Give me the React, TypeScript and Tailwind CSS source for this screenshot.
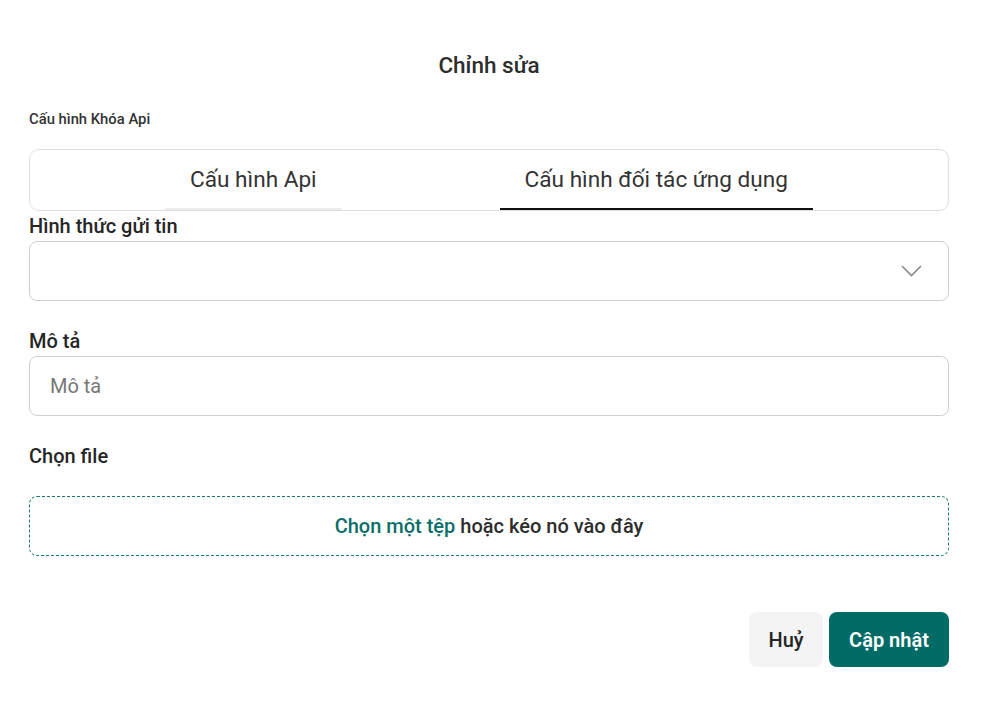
import React, { useState } from 'react';

export default function App() {
  const [tab, setTab] = useState(1);
  const tabs = ['Cấu hình Api', 'Cấu hình đối tác ứng dụng'];

  return (
    <div className="min-h-screen bg-white pl-[29px] pr-[34px] pt-[50px] text-[#2b2b2b]" style={{ fontFamily: 'Roboto, "Noto Sans", sans-serif' }}>
      <h1 className="text-center text-[22.5px] leading-[30px] font-medium text-[#2d2d2d]">Chỉnh sửa</h1>

      <div className="mt-[30px] text-[14.8px] leading-[18px] font-medium text-[#333]">Cấu hình Khóa Api</div>

      {/* Tabs */}
      <div className="mt-[21px] h-[62px] rounded-[10px] border border-[#dedede] flex justify-center gap-[158px]">
        {tabs.map((t, i) => (
          <button
            key={t}
            onClick={() => setTab(i)}
            className={
              'h-full px-[25px] pt-[2px] text-[22.6px] font-normal text-[#333] border-b-[2px] ' +
              (tab === i ? 'border-[#111]' : 'border-[#ededed]')
            }
          >
            {t}
          </button>
        ))}
      </div>

      <label className="block mt-[2px] text-[20px] leading-[26px] font-medium text-[#262626]">Hình thức gửi tin</label>
      <div className="mt-[2px] h-[60px] rounded-[8px] border border-[#cfcfcf] flex items-center justify-end pr-[26px]">
        <svg width="21" height="12" viewBox="0 0 21 12" fill="none">
          <polyline points="1,1 10.5,10.5 20,1" stroke="#8a8a8a" strokeWidth="1.6" />
        </svg>
      </div>

      <label className="block mt-[27px] text-[20px] leading-[26px] font-medium text-[#262626]">Mô tả</label>
      <input
        placeholder="Mô tả"
        className="mt-[2px] w-full h-[60px] rounded-[8px] border border-[#cfcfcf] px-[20px] text-[20px] text-[#333] placeholder:text-[#777] outline-none"
      />

      <label className="block mt-[27px] text-[20px] leading-[26px] font-medium text-[#262626]">Chọn file</label>
      <div className="mt-[27px] h-[60px] rounded-[8px] border border-dashed border-[#1a7a75] flex items-center justify-center text-[20px] font-medium">
        <span className="text-[#0b6e69]">Chọn một tệp</span>
        <span className="ml-[5px] text-[#2d2d2d]">hoặc kéo nó vào đây</span>
      </div>

      <div className="mt-[56px] flex justify-end gap-[6px]">
        <button className="h-[55px] w-[74px] rounded-[8px] bg-[#f4f4f4] text-[20px] font-medium text-[#262626]">Huỷ</button>
        <button className="h-[55px] w-[120px] rounded-[8px] bg-[#036b66] text-[20px] font-semibold text-white">Cập nhật</button>
      </div>
    </div>
  );
}
